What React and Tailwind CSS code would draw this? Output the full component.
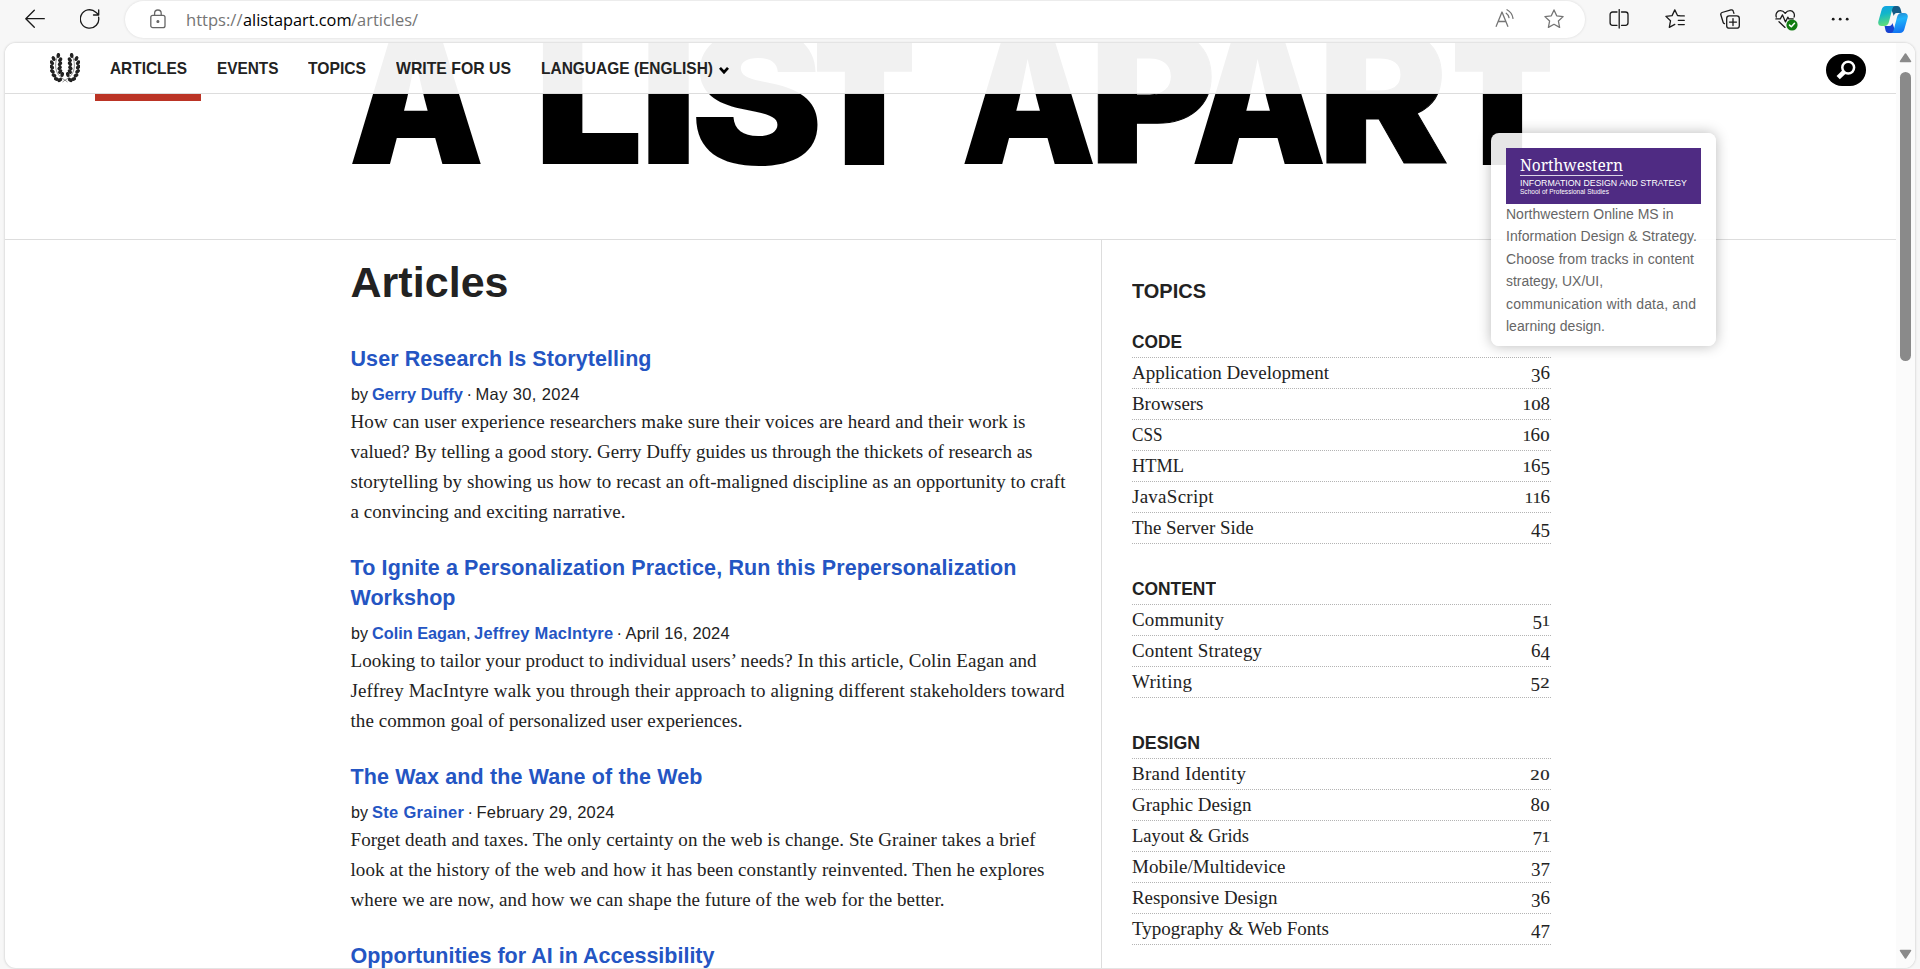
import { useLayoutEffect, useRef, useState } from "react";

const SANS = "font-['Liberation_Sans',Arial,sans-serif]";
const SERIF = "font-['Liberation_Serif',Georgia,serif]";

// One line of text that spans exactly `w` pixels: short lines are tracked out,
// long ones are condensed.
function Fit({ w, className = "", children }) {
  const ref = useRef(null);
  const [fit, setFit] = useState({});
  useLayoutEffect(() => {
    const el = ref.current;
    el.style.letterSpacing = "0px";
    el.style.transform = "none";
    const natural = el.getBoundingClientRect().width;
    const gaps = Math.max(1, el.textContent.length - 1);
    const next =
      natural > w
        ? { letterSpacing: "0px", transform: `scaleX(${w / natural})` }
        : { letterSpacing: (w - natural) / gaps + "px", transform: "none" };
    Object.assign(el.style, next);
    setFit(next);
  }, [w]);
  return (
    <span className="inline-block whitespace-nowrap" style={{ width: w }}>
      <span ref={ref} className={"inline-block origin-left whitespace-pre " + className} style={fit}>
        {children}
      </span>
    </span>
  );
}

/* ---------- browser chrome ---------- */

function Icon({ className = "", children, box = "0 0 20 20" }) {
  return (
    <svg viewBox={box} fill="none" stroke="currentColor" strokeWidth="1.3" strokeLinecap="round" strokeLinejoin="round" className={"shrink-0 " + className}>
      {children}
    </svg>
  );
}

const STAR = "M10 .9l2.7 5.9 6.4.8-4.7 4.4 1.2 6.4L10 15.3l-5.6 3.1 1.2-6.4L.9 7.6l6.4-.8z";

function Toolbar() {
  return (
    <div className="flex h-[43px] items-start bg-[#f7f7f7] text-[#1a1a1a]">
      <Icon className="mt-[9px] ml-[25px] size-5">
        <path d="M19.3 9.7H1M9.3 1.2L.8 9.7l8.5 8.5" />
      </Icon>
      <Icon className="mt-[9px] ml-[35px] size-5">
        <path d="M18.6 8.2A9.2 9.2 0 1 1 15.8 3.2l2.7 2.4M18.7.8v5.2h-5.2" />
      </Icon>
      <div className="mt-px ml-[25px] flex h-[37px] w-[1460px] items-start rounded-full bg-white shadow-[0_0_3px_rgba(0,0,0,0.12)]">
        <Icon box="0 0 16 20" className="mt-2 ml-[25px] h-5 w-4 text-[#666]">
          <rect x=".8" y="6.3" width="14.2" height="12.4" rx="2" />
          <path d="M4.6 6.2V4.3a3.3 3.3 0 0 1 6.6 0v1.9" />
          <circle cx="7.9" cy="12.5" r=".9" fill="currentColor" />
        </Icon>
        <div className="ml-[20px] flex h-[37px] items-start pt-px font-['Open_Sans','Noto_Sans',sans-serif] text-[17px] leading-[36px] text-[#757575]">
          <Fit w={56.5}>https://</Fit>
          <Fit w={108.5} className="text-black">alistapart.com</Fit>
          <Fit w={67}>/articles/</Fit>
        </div>
        <div className="ml-auto flex items-start pt-2 pr-[21px] text-[#757575]">
          <Icon className="-mt-px mr-[29px] size-5">
            <path d="M1.2 18.3L7 4l5.8 14.3M3.2 13.5h7.7M11.2 5.3c1.7 1.2 2.5 2.5 2.8 4.4M12 1.7c3.5 1.9 5.4 4.5 6 8.6" />
          </Icon>
          <Icon className="size-5">
            <path d={STAR} />
          </Icon>
        </div>
      </div>
      <Icon className="mt-[9px] ml-[24px] h-5 w-5">
        <path d="M8 3H3.600A2.500 2.500 0 0 0 1.100 5.500v8.300a2.500 2.500 0 0 0 2.500 2.500H8M12.500 3h4a2.500 2.500 0 0 1 2.500 2.500v8.300a2.500 2.500 0 0 1-2.500 2.500h-4M10.200.6v18.500" />
      </Icon>
      <Icon className="mt-[9px] ml-[36px] h-5 w-5">
        <path d="M15.500 6.900l-3-.4L9.800.9 7.100 6.600.9 7.400l4.600 4.400-1.200 6.600 5.500-3M13.300 6.900h6M13.300 11.300h6M13.300 15.600h6" />
      </Icon>
      <Icon className="mt-[9px] ml-[35px] h-5 w-5">
        <rect x="6.700" y="6.900" width="12.600" height="12.300" rx="2.500" />
        <path d="M13 9.600v7M9.500 13.100h7M13.900 4.400l-.6-2a1.900 1.900 0 0 0-2.300-1.500L2 3.500A2 2 0 0 0 .8 5.800l2.400 7.700a1.800 1.800 0 0 0 1.300 1.200" />
      </Icon>
      <Icon box="0 0 24 22" className="mt-[9px] ml-[35px] h-[22px] w-6">
        <path d="M1.300 8.100C.2 4.600 2.400 1.700 5.300 1.700c2 0 3.700 1 4.900 2.700 1.200-1.700 2.800-2.700 4.900-2.700 3 0 5.100 2.900 4 6.400M.9 9.900h4.400l2.200-4 3 7 2.300-4.700 1 1.700h4.400M4 12.800l6 5.600" />
        <circle cx="17" cy="16" r="5.600" fill="#107c10" stroke="none" />
        <path d="M14.500 16.100l1.800 1.700 3.200-3.500" stroke="#fff" strokeWidth="1.500" />
      </Icon>
      <Icon className="mt-[9px] ml-[31px] h-5 w-5">
        <g fill="currentColor" stroke="none">
          <circle cx="3.200" cy="10.200" r="1.400" />
          <circle cx="10.200" cy="10.200" r="1.400" />
          <circle cx="17.200" cy="10.200" r="1.400" />
        </g>
      </Icon>
      <svg viewBox="0 0 30 27" className="mt-[6px] ml-[28px] h-[27px] w-[30px] shrink-0">
        <defs>
          <linearGradient id="cpA" x1="0" y1="0" x2="0.2" y2="1">
            <stop offset="0" stopColor="#129fe8" />
            <stop offset=".45" stopColor="#12b7c8" />
            <stop offset="1" stopColor="#5fdc7a" />
          </linearGradient>
          <linearGradient id="cpB" x1="0" y1="0" x2="0.2" y2="1">
            <stop offset="0" stopColor="#2a7fc4" />
            <stop offset=".4" stopColor="#1fb4fb" />
            <stop offset="1" stopColor="#1377f2" />
          </linearGradient>
        </defs>
        <path d="M15.500 0h3.800c1.800 0 2.600 1.100 3.200 2.800L23.600 7h-4.800c-2 0-2.500 1.400-3 3L12 0z" fill="#145b86" />
        <path d="M14.500 27h-3.800c-1.800 0-2.600-1.100-3.200-2.800L6.600 20h4.600c2 0 2.700-1.400 3.200-3L18 27z" fill="#1742d0" />
        <path d="M8 0h9.500c-1.800 0-2.600 1.100-3.200 3L11 15.800C10.400 18.200 9 20 6.500 20H3.800C.8 20-.3 18 .4 15.200L3.700 3.500C4.400 1.200 5.700 0 8 0z" fill="url(#cpA)" />
        <path d="M22 27h-9.500c1.800 0 2.600-1.100 3.200-3L19 11.200C19.600 8.800 21 7 23.500 7h2.700c3 0 4.100 2 3.400 4.800l-3.300 11.700C25.600 25.800 24.300 27 22 27z" fill="url(#cpB)" />
      </svg>
    </div>
  );
}

/* ---------- site header ---------- */

// Leaves of one laurel branch: centre x, centre y, rotation in degrees.
const LEAVES = [
  [8.3, 2.5, 8], [3.6, 5.6, -30], [10.2, 6.8, 38], [1.9, 9.7, -36], [10, 10.8, 42],
  [1.8, 14, -42], [9.6, 14.9, 44], [2.4, 18.4, -50], [10.2, 18.6, 36],
  [4, 22.4, -62], [12.2, 21.6, 16], [6.4, 26, -72], [9.8, 27, 60],
];

function Branch() {
  return (
    <g>
      <path d="M7.500 3.500C5 9 4.500 17 9 22.500c2.500 3 5.500 4 8.500 6.500" fill="none" stroke="#222" strokeWidth=".5" />
      {LEAVES.map(([x, y, r], i) => (
        <ellipse key={i} cx={x} cy={y} rx="1.800" ry="2.600" transform={`rotate(${r} ${x} ${y})`} fill="#222" />
      ))}
    </g>
  );
}

function SiteHeader() {
  return (
    <header className="absolute inset-x-0 top-0 h-[51px] border-b border-[#ddd] bg-white/[.945]">
      <div className={"flex items-start text-[17px] leading-6 font-bold text-[#222] " + SANS}>
        <svg viewBox="0 0 30 30" className="mt-[10px] ml-[45px] size-[30px] shrink-0">
          <Branch />
          <g transform="translate(30 0) scale(-1 1)">
            <Branch />
          </g>
        </svg>
        <nav className="flex items-start pl-[15px]">
          <a className="flex h-[58px] w-[106px] flex-col items-center justify-between">
            <span className="pt-[13.5px]"><Fit w={77}>ARTICLES</Fit></span>
            <span className="h-[7px] w-full bg-[#bb3425]" />
          </a>
          <a className="pt-[13.5px] pl-4"><Fit w={61.5}>EVENTS</Fit></a>
          <a className="pt-[13.5px] pl-[29.5px]"><Fit w={58}>TOPICS</Fit></a>
          <a className="pt-[13.5px] pl-[30px]"><Fit w={115}>WRITE FOR US</Fit></a>
          <a className="flex items-center pt-[13.5px] pl-[29.5px]">
            <Fit w={172}>LANGUAGE (ENGLISH)</Fit>
            <svg viewBox="0 0 10 9" className="mt-[3px] ml-[6.5px] h-[9px] w-[10px]">
              <path d="M1 1.800l4 4.400 4-4.400" fill="none" stroke="#000" strokeWidth="2.700" />
            </svg>
          </a>
        </nav>
        <button className="mt-[11px] mr-[30px] ml-auto flex h-8 w-10 items-center justify-center rounded-[16px] bg-black">
          <svg viewBox="0 0 20 20" className="size-5" fill="none" stroke="#fff">
            <circle cx="12.200" cy="7.600" r="5.900" strokeWidth="2.500" />
            <path d="M8 12l-5.800 5.700" strokeWidth="4.600" />
          </svg>
        </button>
      </div>
    </header>
  );
}

/* ---------- masthead ---------- */

// Each letter with the left and right edges of its ink and the width of its outline.
const MAST = [
  ["A", 351.7, 482, 0], ["L", 541.5, 638.5, 2], ["I", 647, 690, 0], ["S", 694.5, 818, 0], ["T", 815, 913, 16],
  ["A", 964, 1094.5, 0], ["P", 1096.5, 1213.5, 1], ["A", 1194, 1324.5, 0], ["R", 1325, 1447.5, 1], ["T", 1453, 1551, 16],
];
const MAST_FONT = "900 100px Inter";

function Masthead() {
  const [ink, setInk] = useState(null);
  useLayoutEffect(() => {
    const ctx = document.createElement("canvas").getContext("2d");
    ctx.font = MAST_FONT;
    const m = { height: ctx.measureText("I").actualBoundingBoxAscent };
    for (const [c] of MAST) {
      const t = ctx.measureText(c);
      m[c] = [-t.actualBoundingBoxLeft, t.actualBoundingBoxRight];
    }
    setInk(m);
  }, []);
  return (
    <div className="h-[197px] border-b border-[#ddd]">
      <svg viewBox="5 43 1891 196" className="h-[196px] w-full" role="heading" aria-label="A LIST APART">
        {ink &&
          MAST.map(([c, l, r, o], i) => {
            const [a, b] = ink[c];
            const sx = (r - l - o) / (b - a);
            const sy = (135 - o) / ink.height;
            return (
              <text
                key={i}
                transform={`translate(${l + o / 2 - a * sx} ${163.7 - o / 2}) scale(${sx} ${sy})`}
                className="font-[Inter] text-[100px] font-black"
                fill="#000"
                stroke={o ? "#000" : "none"}
                strokeWidth={o}
                vectorEffect="non-scaling-stroke"
                strokeLinejoin="miter"
              >
                {c}
              </text>
            );
          })}
      </svg>
    </div>
  );
}

/* ---------- articles ---------- */

const ARTICLES = [
  {
    title: [["User Research Is Storytelling", 301]],
    authors: [["Gerry Duffy", 91]],
    date: ["May 30, 2024", 104],
    body: [
      ["How can user experience researchers make sure their voices are heard and their work is", 675],
      ["valued? By telling a good story. Gerry Duffy guides us through the thickets of research as", 682],
      ["storytelling by showing us how to recast an oft-maligned discipline as an opportunity to craft", 715],
      ["a convincing and exciting narrative.", 275],
    ],
  },
  {
    title: [["To Ignite a Personalization Practice, Run this Prepersonalization", 666], ["Workshop", 105]],
    authors: [["Colin Eagan", 94], ["Jeffrey MacIntyre", 139]],
    date: ["April 16, 2024", 104],
    body: [
      ["Looking to tailor your product to individual users’ needs? In this article, Colin Eagan and", 686],
      ["Jeffrey MacIntyre walk you through their approach to aligning different stakeholders toward", 714],
      ["the common goal of personalized user experiences.", 392],
    ],
  },
  {
    title: [["The Wax and the Wane of the Web", 352]],
    authors: [["Ste Grainer", 92]],
    date: ["February 29, 2024", 138],
    body: [
      ["Forget death and taxes. The only certainty on the web is change. Ste Grainer takes a brief", 685],
      ["look at the history of the web and how it has been constantly reinvented. Then he explores", 694],
      ["where we are now, and how we can shape the future of the web for the better.", 594],
    ],
  },
  { title: [["Opportunities for AI in Accessibility", 364]], authors: [], body: [] },
];

function Article({ title, authors, date, body }) {
  return (
    <article className="mb-[26px]">
      <h2 className={"text-[21.5px] leading-[30px] font-bold text-[#2455c3] " + SANS}>
        {title.map(([t, w]) => (
          <span key={t} className="block h-[30px]"><Fit w={w}>{t}</Fit></span>
        ))}
      </h2>
      {date && (
        <div className={"mt-[7px] flex h-[26px] text-[16.5px] leading-[26px] " + SANS}>
          <Fit w={17}>by</Fit>
          {authors.map(([name, w], i) => (
            <span key={name} className="flex pl-[4.5px] font-bold text-[#2455c3]">
              <Fit w={w}>{name}</Fit>
              {i < authors.length - 1 && <span className="-mr-px font-normal text-[#222]">,</span>}
            </span>
          ))}
          <span className="flex w-[12.5px] items-center justify-center">·</span>
          <Fit w={date[1]}>{date[0]}</Fit>
        </div>
      )}
      <div className={"text-[19px] leading-[30px] " + SERIF}>
        {body.map(([t, w]) => (
          <p key={t} className="h-[30px]"><Fit w={w}>{t}</Fit></p>
        ))}
      </div>
    </article>
  );
}

/* ---------- topics ---------- */

const TOPICS = [
  ["CODE", 50, [
    ["Application Development", 197, "36"], ["Browsers", 71.5, "108"], ["CSS", 30.5, "160"],
    ["HTML", 52, "165"], ["JavaScript", 81.5, "116"], ["The Server Side", 121.5, "45"],
  ]],
  ["CONTENT", 84, [
    ["Community", 92, "51"], ["Content Strategy", 130, "64"], ["Writing", 60, "52"],
  ]],
  ["DESIGN", 68, [
    ["Brand Identity", 114, "20"], ["Graphic Design", 119.5, "80"], ["Layout & Grids", 117, "71"],
    ["Mobile/Multidevice", 153.5, "37"], ["Responsive Design", 145.5, "36"], ["Typography & Web Fonts", 197, "47"],
  ]],
];

// Text figures: 0, 1 and 2 sit at x-height, 3 4 5 7 9 descend below the baseline.
function Figures({ value }) {
  return (
    <span className="whitespace-nowrap">
      {value.split("").map((d, i) => (
        <span
          key={i}
          className={
            d === "0" || d === "2"
              ? "inline-block w-[10px] origin-bottom scale-x-125 text-center text-[15px] leading-none [-webkit-text-stroke:0.15px_#222]"
              : d === "1"
                ? "inline-block w-[8px] origin-bottom scale-x-110 text-center text-[15px] leading-none [-webkit-text-stroke:0.15px_#222]"
                : "34579".includes(d)
                  ? "align-[-3px] leading-none"
                  : ""
          }
        >
          {d}
        </span>
      ))}
    </span>
  );
}

function Topics() {
  return (
    <aside className="h-full w-[451px] shrink-0 border-l border-[#ddd] pt-[36px] pl-[30px]">
      <h2 className={"h-[53px] text-[20.5px] leading-[30px] font-bold " + SANS}><Fit w={74}>TOPICS</Fit></h2>
      <div className="flex flex-col gap-8">
        {TOPICS.map(([name, w, rows]) => (
          <section key={name} className="w-[419px]">
            <h3 className={"h-[29px] border-b border-dotted border-[#b4b4b4] text-[18px] leading-[26px] font-bold " + SANS}>
              <Fit w={w}>{name}</Fit>
            </h3>
            {rows.map(([label, lw, count]) => (
              <div key={label} className={"flex h-[31px] justify-between border-b border-dotted border-[#b4b4b4] pr-px text-[19px] leading-[29px] " + SERIF}>
                <Fit w={lw}>{label}</Fit>
                <Figures value={count} />
              </div>
            ))}
          </section>
        ))}
      </div>
    </aside>
  );
}

/* ---------- sponsor card ---------- */

const AD = [
  ["Northwestern Online MS in", 167.5], ["Information Design & Strategy.", 191], ["Choose from tracks in content", 188],
  ["strategy, UX/UI,", 97], ["communication with data, and", 190], ["learning design.", 99],
];

function Sponsor() {
  return (
    <div className={"absolute top-[90px] left-[1486px] h-[213px] w-[225px] rounded-[8px] bg-white/90 p-[15px] shadow-[0_0_14px_rgba(0,0,0,0.28)] " + SANS}>
      <div className="h-[56px] bg-[#4f2b83] pt-[8px] pl-[14px] text-white">
        <div className="h-[19.5px] w-[103px] border-b border-white/80 font-['Noto_Serif','Liberation_Serif',serif] text-[16.5px] leading-[18px]"><Fit w={103}>Northwestern</Fit></div>
        <div className="h-[12px] pt-[2px] text-[9.5px] leading-[10px]"><Fit w={167}>INFORMATION DESIGN AND STRATEGY</Fit></div>
        <div className="text-[6.500px] leading-[8px]"><Fit w={89}>School of Professional Studies</Fit></div>
      </div>
      <div className="-mt-px text-[14px] leading-[22.400px] text-[#666]">
        {AD.map(([t, w]) => (
          <div key={t} className="h-[22.400px]"><Fit w={w}>{t}</Fit></div>
        ))}
      </div>
    </div>
  );
}

function Scrollbar() {
  return (
    <div className="flex w-[19px] shrink-0 flex-col items-center bg-[#fbfbfb] pt-[10px] pb-[9px]">
      <svg viewBox="0 0 13 10" className="h-[10px] w-[13px]"><path d="M6.500 1l5 7.500h-10z" fill="#8a8a8a" stroke="#8a8a8a" strokeWidth="1.500" strokeLinejoin="round" /></svg>
      <div className="mt-[9px] h-[289px] w-[11px] rounded-full bg-[#8a8a8a]" />
      <svg viewBox="0 0 13 10" className="mt-auto h-[10px] w-[13px]"><path d="M6.500 9l5-7.500h-10z" fill="#8a8a8a" stroke="#8a8a8a" strokeWidth="1.500" strokeLinejoin="round" /></svg>
    </div>
  );
}

export default function App() {
  return (
    <div className="h-[969px] w-[1920px] overflow-hidden bg-[#f7f7f7] text-[#222]">
      <Toolbar />
      <div className="mx-[5px] flex h-[925px] overflow-hidden rounded-[11px] bg-white shadow-[0_0_2px_1px_rgba(0,0,0,0.10)]">
        <div className="relative h-full w-[1891px] overflow-hidden">
          <Masthead />
          <div className="flex h-[728px] pl-[345.5px]">
            <main className="w-[750.5px] shrink-0 pt-[19px]">
              <h1 className={"mb-[37px] h-12 text-[43px] leading-[47px] font-bold " + SANS}><Fit w={158}>Articles</Fit></h1>
              {ARTICLES.map((a) => <Article key={a.title[0][0]} {...a} />)}
            </main>
            <Topics />
          </div>
          <SiteHeader />
          <Sponsor />
        </div>
        <Scrollbar />
      </div>
    </div>
  );
}
